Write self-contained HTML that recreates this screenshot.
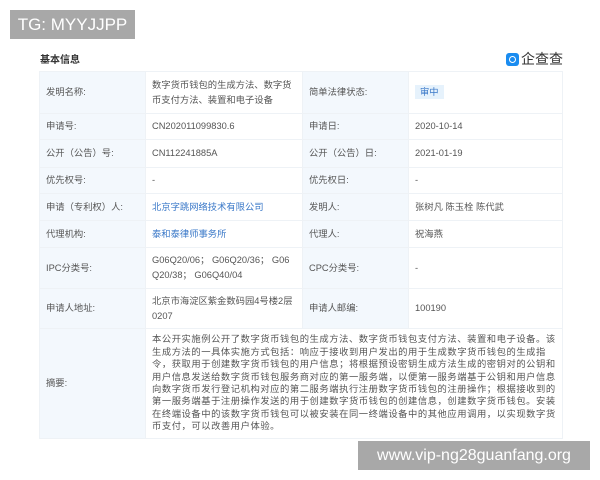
<!DOCTYPE html>
<html><head><meta charset="utf-8"><style>
body{margin:0;width:600px;height:480px;background:#fff;position:relative;overflow:hidden;font-family:"Liberation Sans","Noto Sans CJK SC",sans-serif;color:#555}
.tg{position:absolute;left:10px;top:10px;width:125px;height:29px;background:#a8a8a8;color:#fff;font-size:17px;line-height:29px;text-align:center}
.wm{position:absolute;left:358px;top:441px;width:232px;height:29px;background:#a8a8a8;color:#fff;font-size:16px;line-height:29px;text-align:center}
.h{position:absolute;left:40px;top:51px;font-size:10px;font-weight:bold;color:#333}
.logo{position:absolute;left:506px;top:49px;font-size:14px;color:#333;display:flex;align-items:center}
.logo i{display:inline-block;width:13px;height:13px;background:#1a8cf0;border-radius:3px;margin-right:2px;position:relative}
.logo i:after{content:"";position:absolute;left:3px;top:3px;width:5px;height:5px;border:1.3px solid #fff;border-radius:50%}
table{position:absolute;left:39px;top:71px;width:524px;border-collapse:collapse;font-size:9.3px;table-layout:fixed}
td{border:1px solid #eef2f6;padding:0 6px;vertical-align:middle;line-height:15px;word-break:break-all;overflow:hidden}
td.l{background:#f3f8fd}
td.v{background:#fff}
.a{color:#3a78c8}
.tag{background:#e6f2fc;color:#3a78c8;padding:2px 5px}
.abs{font-size:9.3px;line-height:12.4px;letter-spacing:0.55px;padding:3px 3px 4px 6px}
</style></head><body>
<div class="tg">TG: MYYJJPP</div>
<div class="h">基本信息</div>
<div class="logo"><i></i>企查查</div>
<table>
<colgroup><col style="width:106px"><col style="width:157px"><col style="width:106px"><col></colgroup>
<tr style="height:42px"><td class="l">发明名称:</td><td class="v">数字货币钱包的生成方法、数字货币支付方法、装置和电子设备</td><td class="l">简单法律状态:</td><td class="v"><span class="tag">审中</span></td></tr>
<tr style="height:26px"><td class="l">申请号:</td><td class="v">CN202011099830.6</td><td class="l">申请日:</td><td class="v">2020-10-14</td></tr>
<tr style="height:28px"><td class="l">公开（公告）号:</td><td class="v">CN112241885A</td><td class="l">公开（公告）日:</td><td class="v">2021-01-19</td></tr>
<tr style="height:26px"><td class="l">优先权号:</td><td class="v">-</td><td class="l">优先权日:</td><td class="v">-</td></tr>
<tr style="height:27px"><td class="l">申请（专利权）人:</td><td class="v a">北京字跳网络技术有限公司</td><td class="l">发明人:</td><td class="v">张树凡 陈玉栓 陈代武</td></tr>
<tr style="height:27px"><td class="l">代理机构:</td><td class="v a">泰和泰律师事务所</td><td class="l">代理人:</td><td class="v">祝海燕</td></tr>
<tr style="height:41px"><td class="l">IPC分类号:</td><td class="v">G06Q20/06； G06Q20/36； G06Q20/38； G06Q40/04</td><td class="l">CPC分类号:</td><td class="v">-</td></tr>
<tr style="height:40px"><td class="l">申请人地址:</td><td class="v">北京市海淀区紫金数码园4号楼2层0207</td><td class="l">申请人邮编:</td><td class="v">100190</td></tr>
<tr style="height:110px"><td class="l">摘要:</td><td class="v abs" colspan="3">本公开实施例公开了数字货币钱包的生成方法、数字货币钱包支付方法、装置和电子设备。该生成方法的一具体实施方式包括：响应于接收到用户发出的用于生成数字货币钱包的生成指令，获取用于创建数字货币钱包的用户信息；将根据预设密钥生成方法生成的密钥对的公钥和用户信息发送给数字货币钱包服务商对应的第一服务端，以便第一服务端基于公钥和用户信息向数字货币发行登记机构对应的第二服务端执行注册数字货币钱包的注册操作；根据接收到的第一服务端基于注册操作发送的用于创建数字货币钱包的创建信息，创建数字货币钱包。安装在终端设备中的该数字货币钱包可以被安装在同一终端设备中的其他应用调用，以实现数字货币支付，可以改善用户体验。</td></tr>
</table>
<div class="wm">www.vip-ng28guanfang.org</div>
</body></html>
